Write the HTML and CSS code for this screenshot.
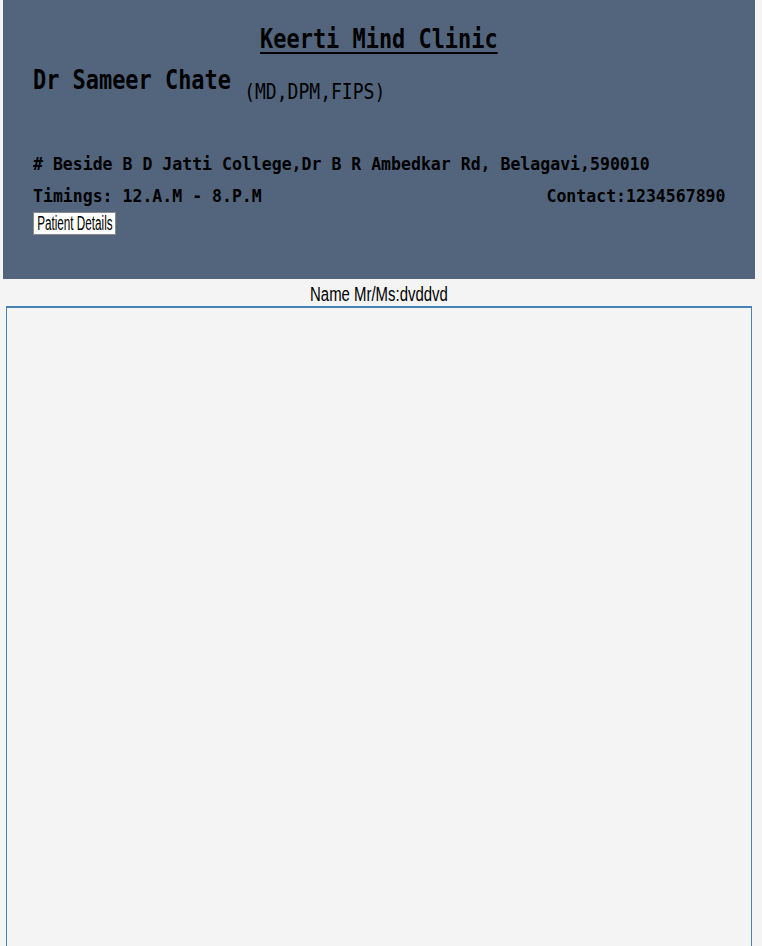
FILE: index.html
```html
<!DOCTYPE html>
<html lang="en">
<head>
<meta charset="utf-8">
<title>Keerti Mind Clinic</title>
<link rel="stylesheet" href="styles.css">
</head>
<body>
<header class="header">
  <h1 class="title"><span class="sx">Keerti Mind Clinic</span></h1>
  <h2 class="doctor"><span class="sx">Dr Sameer Chate <span class="creds">(MD,DPM,FIPS)</span></span></h2>
  <p class="address"><span class="sx"># Beside B D Jatti College,Dr B R Ambedkar Rd, Belagavi,590010</span></p>
  <div class="timings">
    <span class="sx timing">Timings: 12.A.M - 8.P.M</span>
    <span class="sx contact">Contact:1234567890</span>
  </div>
  <button class="btn" type="button"><span class="sx">Patient Details</span></button>
</header>
<div class="patient-name"><span class="sx">Name Mr/Ms:dvddvd</span></div>
<div class="notes"></div>
</body>
</html>
```

FILE: styles.css
```css
html {
  overflow: hidden;
}

body {
  margin: 0;
  background: #f4f4f4;
  color: #000;
}

.sx {
  display: inline-block;
  white-space: pre;
}

.header {
  margin-left: 3px;
  width: 752px;
  height: 279px;
  box-sizing: border-box;
  padding: 24px 30px 0;
  background: #52657c;
  font-family: "DejaVu Sans Mono", monospace;
  font-weight: bold;
}

.title {
  margin: 0;
  font-size: 26px;
  line-height: 30px;
  text-align: center;
  font-weight: bold;
}

.title .sx {
  transform: scaleX(0.843);
  text-decoration: underline;
  text-decoration-thickness: 2px;
  text-underline-offset: 4px;
}

.doctor {
  margin: 11px 0 0;
  font-size: 26px;
  line-height: 30px;
  font-weight: bold;
}

.doctor > .sx {
  transform: scaleX(0.843);
  transform-origin: 0 50%;
}

.creds {
  font-size: 21.4px;
  font-weight: normal;
  line-height: 0;
  vertical-align: -10px;
}

.address {
  margin: 57px 0 0;
  font-size: 18.5px;
  line-height: 24px;
}

.address .sx {
  transform: scaleX(0.893);
  transform-origin: 0 50%;
}

.timings {
  margin-top: 8px;
  display: flex;
  justify-content: space-between;
  font-size: 18.5px;
  line-height: 24px;
}

.timing {
  transform: scaleX(0.893);
  transform-origin: 0 50%;
}

.contact {
  transform: scaleX(0.893);
  transform-origin: 100% 50%;
}

.btn {
  margin-top: 4px;
  width: 83px;
  height: 23px;
  box-sizing: border-box;
  padding: 0;
  display: flex;
  align-items: center;
  justify-content: center;
  overflow: visible;
  background: #fff;
  border: 1px solid #8a8a8a;
  border-radius: 0;
  font-family: "Liberation Sans", Arial, sans-serif;
  font-weight: normal;
  font-size: 19.5px;
  line-height: 21px;
  color: #000;
}

.btn .sx {
  transform: scaleX(0.6);
}

.patient-name {
  margin: 3px 0 0 3px;
  width: 752px;
  text-align: center;
  font-family: "Liberation Sans", Arial, sans-serif;
  font-size: 19.5px;
  line-height: 24px;
}

.patient-name .sx {
  transform: scaleX(0.766);
}

.notes {
  margin-left: 6px;
  width: 746px;
  height: 640px;
  box-sizing: border-box;
  border: 1px solid #4682b4;
  border-top-width: 2px;
  border-bottom: none;
}
```
